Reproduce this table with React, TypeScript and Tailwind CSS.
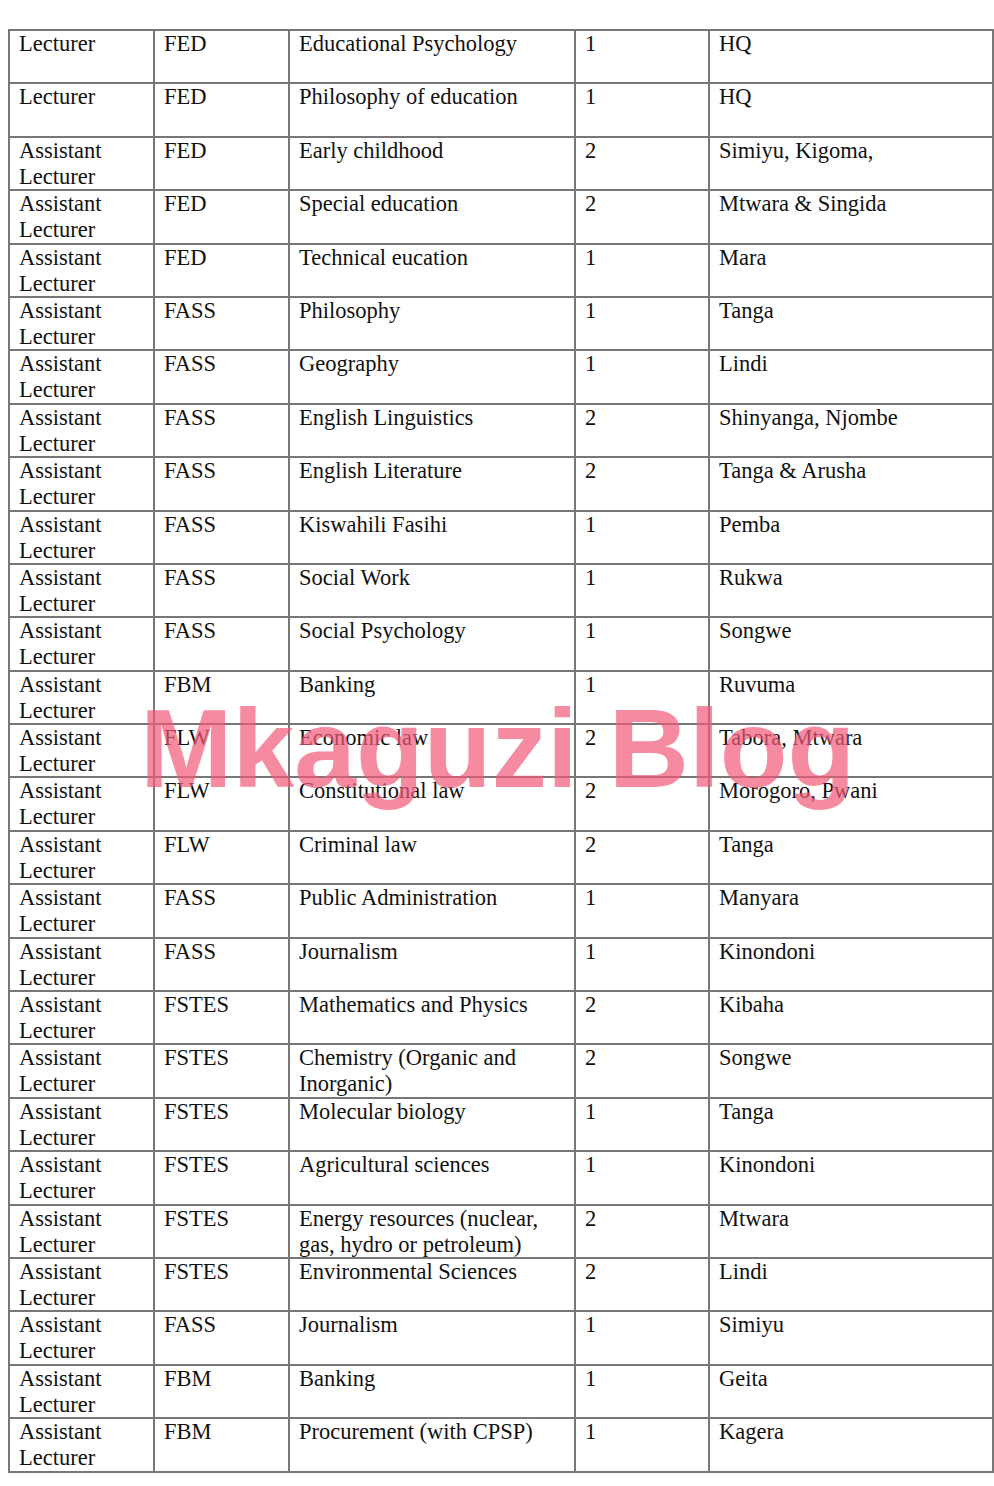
const rows: [string, string, string, string, string][] = [
  ['Lecturer', 'FED', 'Educational Psychology', '1', 'HQ'],
  ['Lecturer', 'FED', 'Philosophy of education', '1', 'HQ'],
  ['Assistant\nLecturer', 'FED', 'Early childhood', '2', 'Simiyu, Kigoma,'],
  ['Assistant\nLecturer', 'FED', 'Special education', '2', 'Mtwara & Singida'],
  ['Assistant\nLecturer', 'FED', 'Technical eucation', '1', 'Mara'],
  ['Assistant\nLecturer', 'FASS', 'Philosophy', '1', 'Tanga'],
  ['Assistant\nLecturer', 'FASS', 'Geography', '1', 'Lindi'],
  ['Assistant\nLecturer', 'FASS', 'English Linguistics', '2', 'Shinyanga, Njombe'],
  ['Assistant\nLecturer', 'FASS', 'English Literature', '2', 'Tanga & Arusha'],
  ['Assistant\nLecturer', 'FASS', 'Kiswahili Fasihi', '1', 'Pemba'],
  ['Assistant\nLecturer', 'FASS', 'Social Work', '1', 'Rukwa'],
  ['Assistant\nLecturer', 'FASS', 'Social Psychology', '1', 'Songwe'],
  ['Assistant\nLecturer', 'FBM', 'Banking', '1', 'Ruvuma'],
  ['Assistant\nLecturer', 'FLW', 'Economic law', '2', 'Tabora, Mtwara'],
  ['Assistant\nLecturer', 'FLW', 'Constitutional law', '2', 'Morogoro, Pwani'],
  ['Assistant\nLecturer', 'FLW', 'Criminal law', '2', 'Tanga'],
  ['Assistant\nLecturer', 'FASS', 'Public Administration', '1', 'Manyara'],
  ['Assistant\nLecturer', 'FASS', 'Journalism', '1', 'Kinondoni'],
  ['Assistant\nLecturer', 'FSTES', 'Mathematics and Physics', '2', 'Kibaha'],
  ['Assistant\nLecturer', 'FSTES', 'Chemistry (Organic and\nInorganic)', '2', 'Songwe'],
  ['Assistant\nLecturer', 'FSTES', 'Molecular biology', '1', 'Tanga'],
  ['Assistant\nLecturer', 'FSTES', 'Agricultural sciences', '1', 'Kinondoni'],
  ['Assistant\nLecturer', 'FSTES', 'Energy resources (nuclear,\ngas, hydro or petroleum)', '2', 'Mtwara'],
  ['Assistant\nLecturer', 'FSTES', 'Environmental Sciences', '2', 'Lindi'],
  ['Assistant\nLecturer', 'FASS', 'Journalism', '1', 'Simiyu'],
  ['Assistant\nLecturer', 'FBM', 'Banking', '1', 'Geita'],
  ['Assistant\nLecturer', 'FBM', 'Procurement (with CPSP)', '1', 'Kagera'],
];

export default function App() {
  return (
    <div className="min-h-[1486px] w-[994px] bg-white pt-[29px] pl-[8px]">
      <div className="relative w-[986px]">
        {/* table */}
        <div
          className="grid grid-cols-[145px_135px_286px_134px_284px] border-l-2 border-t-2 border-[#777] text-[22.5px] leading-[26px] text-[#111]"
          style={{ fontFamily: '"Liberation Serif", "Times New Roman", serif' }}
        >
          {rows.map((row, i) =>
            row.map((cell, j) => (
              <div
                key={i + '-' + j}
                className="h-[53.4px] whitespace-pre border-r-2 border-b-2 border-[#777] pl-[9px] overflow-hidden"
              >
                {cell}
              </div>
            ))
          )}
        </div>

        {/* watermark */}
        <div
          className="pointer-events-none absolute left-[132px] top-[665px] whitespace-nowrap text-[111px] font-bold leading-none text-[#f25a78] opacity-70"
          style={{ fontFamily: '"Liberation Sans", Arial, sans-serif' }}
        >
          Mkaguzi Blog
        </div>
      </div>
    </div>
  );
}
